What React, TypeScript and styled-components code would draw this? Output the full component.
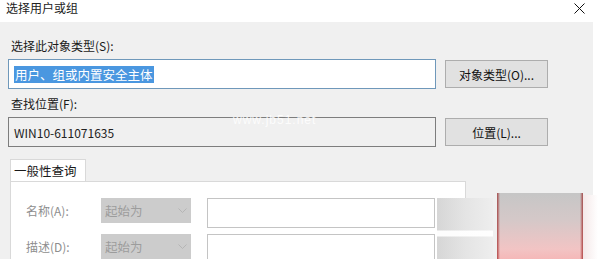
import React from "react";
import styled, { createGlobalStyle } from "styled-components";

const Global = createGlobalStyle`
  html, body { margin: 0; padding: 0; background: #ffffff; }
  body { width: 598px; height: 259px; overflow: hidden; font-family: "Noto Sans CJK SC", "Noto Sans", sans-serif; font-size: 12px; color: #1a1a1a; }
`;

const Window = styled.div`
  position: relative;
  width: 598px;
  height: 259px;
  display: flex;
  flex-direction: column;
  overflow: hidden;
`;

const TitleBar = styled.div`
  height: 22px;
  flex: none;
  display: flex;
  align-items: center;
  justify-content: space-between;
  padding: 0 13px 6px 6px;
  box-sizing: border-box;
  background: #fff;
  font-size: 12px;
  line-height: 16px;
  color: #222;
`;

const Body = styled.div`
  flex: 1;
  margin-right: 5px;
  background: #f0f0f0;
  padding: 16px 0 0 8px;
  display: flex;
  flex-direction: column;
`;

const FieldLabel = styled.div`
  margin-left: 3px;
  line-height: 16px;
  height: 16px;
`;

const FieldRow = styled.div`
  display: flex;
  align-items: center;
  margin-top: 5px;
  margin-bottom: 7px;
`;

const TextBox = styled.div<{ $focused?: boolean }>`
  width: 428px;
  height: 30px;
  box-sizing: border-box;
  border: 1px solid ${(p) => (p.$focused ? "#6f98ba" : "#7d7d7d")};
  background: ${(p) => (p.$focused ? "#ffffff" : "#f0f0f0")};
  display: flex;
  align-items: center;
  padding-left: 5px;
  font-size: ${(p) => (p.$focused ? "12.5px" : "12px")};
  color: #222;
`;

const Selected = styled.span`
  background: #4a97e0;
  color: #fff;
  line-height: 17px;
  padding: 0 1px;
`;

const Button = styled.div`
  margin-left: 9px;
  width: 103px;
  height: 28px;
  box-sizing: border-box;
  background: #e1e1e1;
  border: 1px solid #adadad;
  display: flex;
  align-items: center;
  justify-content: center;
  font-size: 12px;
  color: #111;
`;

const TabStrip = styled.div`
  display: flex;
  margin-top: 5px;
  margin-left: 2px;
`;

const Tab = styled.div`
  width: 76px;
  height: 22px;
  box-sizing: border-box;
  background: #fff;
  border: 1px solid #d9d9d9;
  border-bottom: none;
  display: flex;
  align-items: center;
  padding-left: 3px;
  font-size: 12.5px;
`;

const Panel = styled.div`
  margin-left: 2px;
  width: 456px;
  flex: 1;
  background: #fff;
  border: 1px solid #d9d9d9;
  border-bottom: none;
  box-sizing: border-box;
  padding: 16px 0 0 15px;
  display: flex;
  flex-direction: column;
  gap: 6px;
`;

const QueryRow = styled.div`
  display: flex;
  align-items: flex-start;
`;

const QueryLabel = styled.div`
  width: 75px;
  height: 25px;
  line-height: 25px;
  color: #8e8e8e;
`;

const Combo = styled.div`
  width: 90px;
  height: 25px;
  background: #cccccc;
  display: flex;
  align-items: center;
  justify-content: space-between;
  padding: 0 4px 0 4px;
  box-sizing: border-box;
  color: #9c9c9c;
  font-size: 12.5px;
`;

const QueryInput = styled.div`
  margin-left: 16px;
  width: 228px;
  height: 30px;
  box-sizing: border-box;
  border: 1px solid #c4c4c4;
  background: #fff;
`;

const Watermark = styled.div`
  position: absolute;
  left: 233px;
  top: 113px;
  color: #ffffff;
  font-family: "Liberation Sans", sans-serif;
  font-size: 12px;
  letter-spacing: 1px;
  opacity: 0.85;
`;

const SmudgeGray = styled.div`
  position: absolute;
  left: 437px;
  top: 198px;
  width: 56px;
  height: 61px;
  background:
    linear-gradient(to bottom, transparent 0, transparent 32px, rgba(255,255,255,0.95) 33px, rgba(255,255,255,0.95) 38px, transparent 39px),
    linear-gradient(to right, #d6d6d6, #e4e4e4 50%, #eeeeee);
`;

const SmudgeRed = styled.div`
  position: absolute;
  left: 497px;
  top: 193px;
  width: 86px;
  height: 66px;
  background:
    linear-gradient(to right, rgba(150,20,20,0.7) 0, transparent 3px, transparent 83px, rgba(150,20,20,0.7) 86px),
    linear-gradient(to bottom, #c6c6c6 0, #d4c8c8 40%, #f2c4c4 85%, #f5b8b8 100%);
`;

const SmudgeFade = styled.div`
  position: absolute;
  left: 583px;
  top: 195px;
  width: 15px;
  height: 64px;
  background: linear-gradient(to right, #f4e8e8, #ffffff);
`;

const CloseIcon = () => (
  <svg width="11" height="11" viewBox="0 0 11 11">
    <path d="M0.5 0.5 L10.5 10.5 M10.5 0.5 L0.5 10.5" stroke="#111" strokeWidth="1" fill="none" />
  </svg>
);

const Chevron = () => (
  <svg width="9" height="6" viewBox="0 0 9 6">
    <path d="M0.5 0.5 L4.5 4.5 L8.5 0.5" stroke="#b5b5b5" strokeWidth="1" fill="none" />
  </svg>
);

export default function App() {
  return (
    <>
      <Global />
      <Window>
        <TitleBar>
          <span>选择用户或组</span>
          <CloseIcon />
        </TitleBar>
        <Body>
          <FieldLabel>选择此对象类型(S):</FieldLabel>
          <FieldRow>
            <TextBox $focused>
              <Selected>用户、组或内置安全主体</Selected>
            </TextBox>
            <Button>对象类型(O)...</Button>
          </FieldRow>
          <FieldLabel>查找位置(F):</FieldLabel>
          <FieldRow>
            <TextBox>WIN10-611071635</TextBox>
            <Button>位置(L)...</Button>
          </FieldRow>
          <TabStrip>
            <Tab>一般性查询</Tab>
          </TabStrip>
          <Panel>
            <QueryRow>
              <QueryLabel>名称(A):</QueryLabel>
              <Combo>
                <span>起始为</span>
                <Chevron />
              </Combo>
              <QueryInput />
            </QueryRow>
            <QueryRow>
              <QueryLabel>描述(D):</QueryLabel>
              <Combo>
                <span>起始为</span>
                <Chevron />
              </Combo>
              <QueryInput />
            </QueryRow>
          </Panel>
        </Body>
        <Watermark>www.jb51.net</Watermark>
        <SmudgeGray />
        <SmudgeRed />
        <SmudgeFade />
      </Window>
    </>
  );
}
